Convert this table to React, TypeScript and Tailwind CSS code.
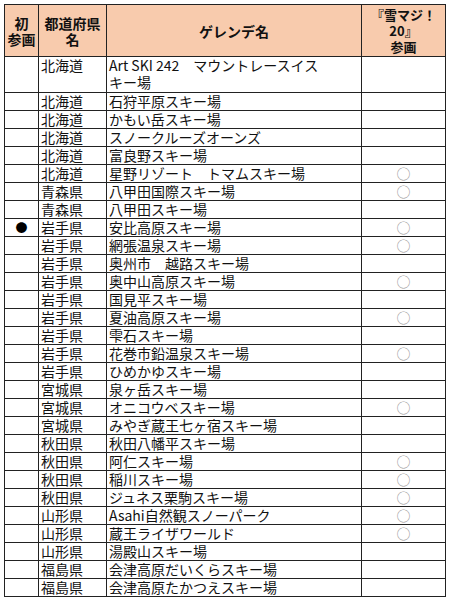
import React from "react";

type Row = { first?: boolean; pref: string; name: React.ReactNode; maji?: boolean; tall?: boolean };

const rows: Row[] = [
  {
    pref: "北海道",
    name: (
      <>
        Art SKI 242　マウントレースイス
        <br />
        キー場
      </>
    ),
    tall: true,
  },
  { pref: "北海道", name: "石狩平原スキー場" },
  { pref: "北海道", name: "かもい岳スキー場" },
  { pref: "北海道", name: "スノークルーズオーンズ" },
  { pref: "北海道", name: "富良野スキー場" },
  { pref: "北海道", name: "星野リゾート　トマムスキー場", maji: true },
  { pref: "青森県", name: "八甲田国際スキー場", maji: true },
  { pref: "青森県", name: "八甲田スキー場" },
  { first: true, pref: "岩手県", name: "安比高原スキー場", maji: true },
  { pref: "岩手県", name: "網張温泉スキー場", maji: true },
  { pref: "岩手県", name: "奥州市　越路スキー場" },
  { pref: "岩手県", name: "奥中山高原スキー場", maji: true },
  { pref: "岩手県", name: "国見平スキー場" },
  { pref: "岩手県", name: "夏油高原スキー場", maji: true },
  { pref: "岩手県", name: "雫石スキー場" },
  { pref: "岩手県", name: "花巻市鉛温泉スキー場", maji: true },
  { pref: "岩手県", name: "ひめかゆスキー場" },
  { pref: "宮城県", name: "泉ヶ岳スキー場" },
  { pref: "宮城県", name: "オニコウベスキー場", maji: true },
  { pref: "宮城県", name: "みやぎ蔵王七ヶ宿スキー場" },
  { pref: "秋田県", name: "秋田八幡平スキー場" },
  { pref: "秋田県", name: "阿仁スキー場", maji: true },
  { pref: "秋田県", name: "稲川スキー場", maji: true },
  { pref: "秋田県", name: "ジュネス栗駒スキー場", maji: true },
  { pref: "山形県", name: "Asahi自然観スノーパーク", maji: true },
  { pref: "山形県", name: "蔵王ライザワールド", maji: true },
  { pref: "山形県", name: "湯殿山スキー場" },
  { pref: "福島県", name: "会津高原だいくらスキー場" },
  { pref: "福島県", name: "会津高原たかつえスキー場" },
];

const font = { fontFamily: '"Noto Sans CJK JP", "Noto Sans", sans-serif' };

export default function App() {
  return (
    <div className="bg-white w-[450px] min-h-[599px] pt-[4px] pl-[4px]" style={font}>
      <table className="border-collapse table-fixed w-[441px] text-[14px] text-[#111]">
        <colgroup>
          <col className="w-[34px]" />
          <col className="w-[68px]" />
          <col className="w-[255px]" />
          <col className="w-[84px]" />
        </colgroup>
        <thead>
          <tr className="bg-[#f8cbad] h-[52px]">
            <th className="border border-[#222] p-0 font-bold text-[14px] leading-[16px] text-center align-middle">
              初<br />参画
            </th>
            <th className="border border-[#222] p-0 font-bold text-[14px] leading-[16px] text-center align-middle">
              都道府県<br />名
            </th>
            <th className="border border-[#222] p-0 font-bold text-[14px] leading-[16px] text-center align-middle">
              ゲレンデ名
            </th>
            <th className="border border-[#222] p-0 font-bold text-[13px] leading-[16px] text-center align-middle">
              『雪マジ！<br />20』<br />参画
            </th>
          </tr>
        </thead>
        <tbody>
          {rows.map((r, i) => (
            <tr key={i} className={r.tall ? "h-[36px]" : "h-[18px]"}>
              <td className="border border-[#222] p-0 text-center align-middle leading-[17px] text-[12px] text-black">
                {r.first ? "●" : ""}
              </td>
              <td className="border border-[#222] p-0 pl-[2px] align-top leading-[17px] whitespace-nowrap">
                {r.pref}
              </td>
              <td className="border border-[#222] p-0 pl-[2px] align-top leading-[17px] whitespace-nowrap">
                {r.name}
              </td>
              <td className="border border-[#222] p-0 text-center align-middle leading-[17px] text-[#999] text-[14px]">
                {r.maji ? "○" : ""}
              </td>
            </tr>
          ))}
        </tbody>
      </table>
    </div>
  );
}
